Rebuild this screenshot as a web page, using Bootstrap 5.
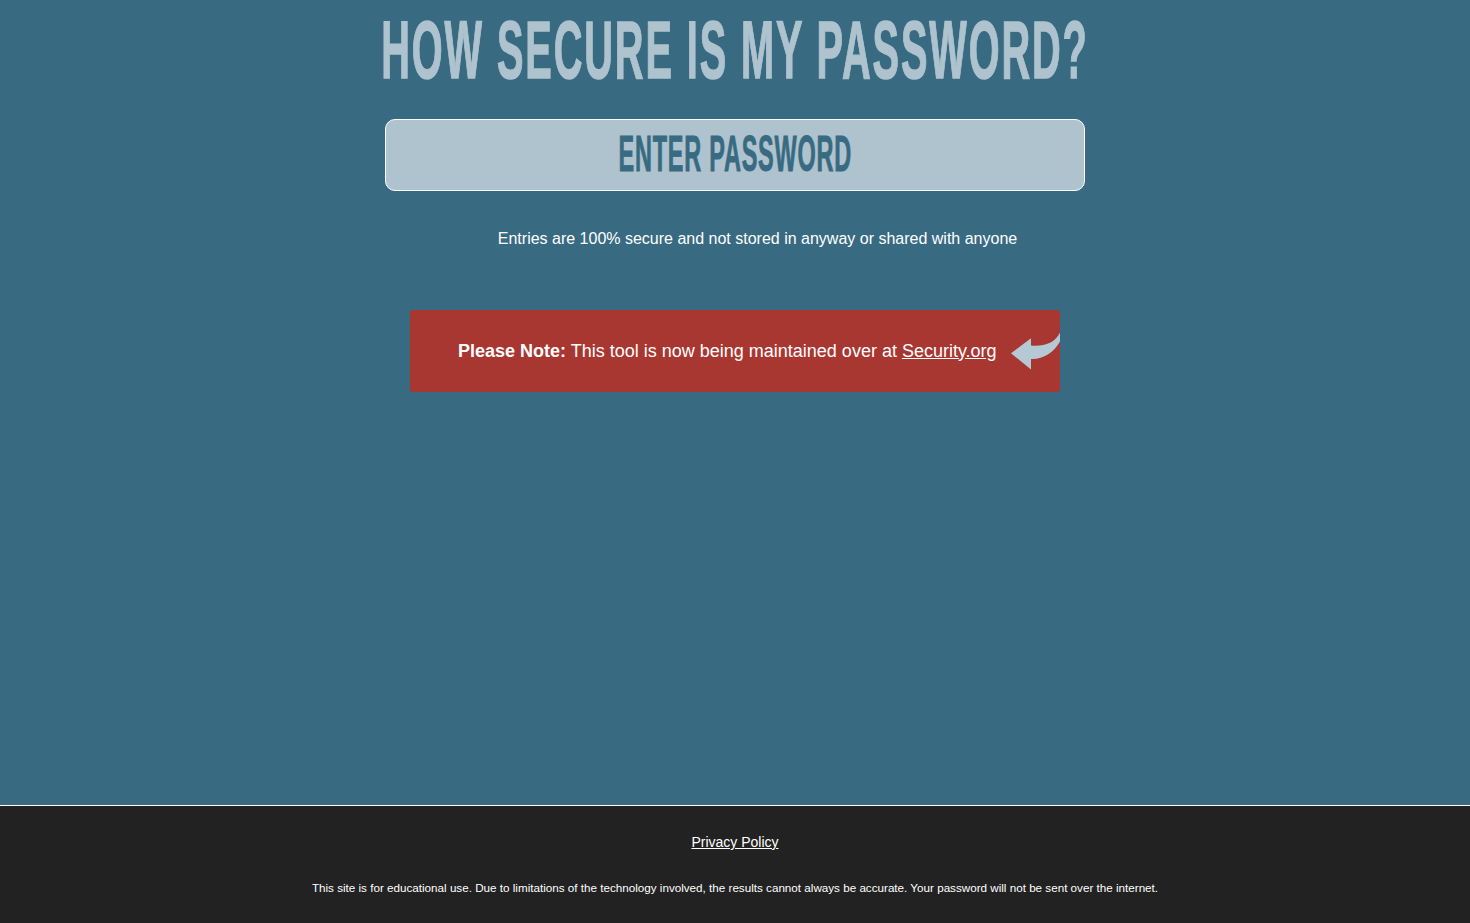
<!doctype html>
<html lang="en">
<head>
<meta charset="utf-8">
<title>How Secure Is My Password?</title>
<link href="https://cdn.jsdelivr.net/npm/bootstrap@5.3.0/dist/css/bootstrap.min.css" rel="stylesheet">
<style>
body{background:#386a82;font-family:"Liberation Sans",Arial,sans-serif;color:#fff;}
.shell{height:923px;}
.hero-title{height:119px;margin:0;white-space:nowrap;}
.hero-title span{display:inline-block;font:700 81px/1 "Liberation Sans",sans-serif;letter-spacing:3.9px;color:#aec3ce;transform:scaleX(.49);margin-top:10px;-webkit-text-stroke:1.4px #aec3ce;}
.pw-box{width:700px;height:72px;background:#aec3ce;border:1px solid #fff;border-radius:10px;white-space:nowrap;}
.pw-box span{display:inline-block;font:700 50px/1 "Liberation Sans",sans-serif;letter-spacing:1.6px;color:#386a82;transform:scaleX(.47);-webkit-text-stroke:.9px #386a82;margin-bottom:3px;}
.assure{font-size:16px;line-height:24px;margin:36px 0 0;padding-left:45px;}
.notice{width:650px;height:82px;margin-top:59px;background:#a93731;border-radius:3px;font-size:18px;padding-left:48px;gap:14px;}
.notice a,.foot a{color:#fff;}
.foot{height:118px;background:#222;border-top:1px solid #fff;}
.foot-link{font-size:14px;line-height:20px;margin:26px 0 0;}
.foot-text{font-size:11.67px;line-height:16px;margin:28px 0 0;}
</style>
</head>
<body>
<div class="shell d-flex flex-column">
  <main class="flex-grow-1 d-flex flex-column align-items-center">
    <h1 class="hero-title d-flex justify-content-center"><span>HOW SECURE IS MY PASSWORD?</span></h1>
    <div class="pw-box d-flex align-items-center justify-content-center"><span>ENTER PASSWORD</span></div>
    <p class="assure text-center">Entries are 100% secure and not stored in anyway or shared with anyone</p>
    <div class="notice d-flex align-items-center">
      <span class="text-nowrap"><strong>Please Note:</strong> This tool is now being maintained over at <a href="#">Security.org</a></span>
      <svg width="49" height="38" viewBox="1011 333 49 38" class="flex-shrink-0" aria-hidden="true"><path fill="#b4c9d4" d="M1011 354.300 1031 339.300v7.200c12 1.200 24-2 29-13v9c-6 11-17 18-29 17.500V370.500Z"/></svg>
    </div>
  </main>
  <footer class="foot text-center">
    <p class="foot-link"><a href="#">Privacy Policy</a></p>
    <p class="foot-text">This site is for educational use. Due to limitations of the technology involved, the results cannot always be accurate. Your password will not be sent over the internet.</p>
  </footer>
</div>
<script src="https://cdn.jsdelivr.net/npm/bootstrap@5.3.0/dist/js/bootstrap.bundle.min.js"></script>
</body>
</html>
